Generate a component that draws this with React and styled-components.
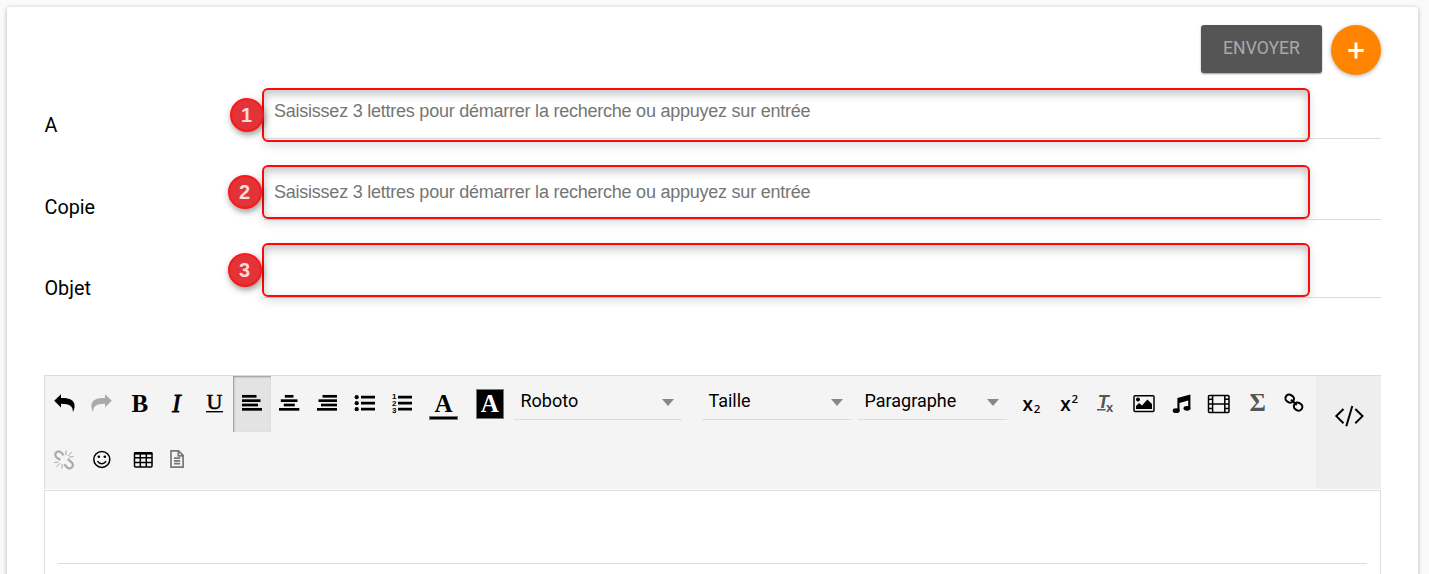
import React from "react";
import styled, { createGlobalStyle } from "styled-components";

const Global = createGlobalStyle`
  *, *::before, *::after { box-sizing: border-box; }
  html, body { margin: 0; background: #fafafa; overflow: hidden; }
  body { font-family: Roboto, sans-serif; color: #000; }
  button, input { font: inherit; border: 0; padding: 0; outline: 0; background: transparent; color: inherit; }
`;

const Page = styled.div`
  height: 574px;
  padding: 7px 11px 0 7px;
  overflow: hidden;
`;

const Card = styled.main`
  height: 640px;
  padding: 18px 37px 0;
  background: #fff;
  border-radius: 3px;
  box-shadow: 0 1px 5px rgba(0, 0, 0, 0.28);
`;

const Actions = styled.header`
  display: flex;
  justify-content: flex-end;
  gap: 9px;
  height: 50px;
`;

const SendButton = styled.button`
  width: 121px;
  height: 48px;
  padding-bottom: 2px;
  border-radius: 3px;
  background: #555;
  color: #aaa;
  font-size: 17.6px;
  box-shadow: 0 1px 2px rgba(0, 0, 0, 0.4);
`;

const AddButton = styled.button`
  display: grid;
  place-items: center;
  width: 50px;
  height: 50px;
  border-radius: 50%;
  background: #ff8500;
  box-shadow: 0 1px 4px rgba(0, 0, 0, 0.32);
`;

const Row = styled.div`
  display: flex;
  align-items: flex-end;
  height: ${(p) => p.$height}px;
`;

const Label = styled.label`
  width: 220px;
  margin-bottom: ${(p) => p.$lift}px;
  padding-left: 0.5px;
  font-size: 19.8px;
  line-height: 24px;
`;

const Field = styled.div`
  position: relative;
  flex: 1;
  height: 52px;
  border-bottom: 1px solid #dcdcdc;
`;

const Input = styled.input`
  display: block;
  width: 100%;
  height: 48px;
  padding-left: 10px;
  font-family: "Liberation Sans", Arial, sans-serif;
  font-size: 18px;
  letter-spacing: -0.235px;
  &::placeholder { color: #757575; opacity: 1; }
`;

const Highlight = styled.div`
  position: absolute;
  left: -2.5px;
  top: ${(p) => p.$top}px;
  width: 1048px;
  height: 54px;
  border: 2px solid #fa0a0a;
  border-radius: 6px;
  box-shadow: 0 4px 10px rgba(0, 0, 0, 0.13), inset 0 4px 10px rgba(0, 0, 0, 0.24);
  pointer-events: none;
`;

const Badge = styled.span`
  position: absolute;
  left: ${(p) => p.$left}px;
  top: 8px;
  display: grid;
  place-items: center;
  width: 34px;
  height: 34px;
  border: 2px solid #fb1818;
  border-radius: 50%;
  background: #e23338;
  color: #ffdada;
  font: bold 20px/30px "Liberation Sans", Arial, sans-serif;
  box-shadow: 1px 3px 6px rgba(0, 0, 0, 0.4);
`;

const Toolbar = styled.div`
  display: flex;
  height: 114px;
  margin-top: 77px;
  border-top: 1px solid #dcdcdc;
  border-left: 1px solid #dcdcdc;
  background: #f4f4f4;
`;

const Tools = styled.div`
  flex: 1;
`;

const ToolRow = styled.div`
  display: flex;
  height: 56px;
`;

const Tool = styled.button`
  display: grid;
  place-items: center;
  flex: none;
  width: ${(p) => p.$width || 37.6}px;
  height: 56px;
  color: ${(p) => p.$color || "#000"};
  background: ${(p) => (p.$active ? "#e3e3e3" : "transparent")};
  box-shadow: ${(p) => (p.$active ? "inset 1px 1px 2px rgba(0,0,0,.35)" : "none")};
  svg { display: block; overflow: visible; }
`;

const Select = styled.div`
  display: flex;
  align-items: center;
  justify-content: space-between;
  flex: none;
  width: ${(p) => p.$width}px;
  height: 44px;
  margin-right: ${(p) => p.$gap}px;
  padding: 6px 8px 0 1px;
  border-bottom: 1px solid #dcdcdc;
  font-size: 18px;
`;

const Caret = styled.span`
  margin-top: 3px;
  border: 6px solid transparent;
  border-top: 7px solid #888;
  border-bottom: 0;
`;

const CodeButton = styled.button`
  display: grid;
  place-items: center;
  width: 65px;
  padding-bottom: 33px;
  background: #eee;
`;

const Editor = styled.section`
  height: 140px;
  margin-top: 1px;
  padding: 72px 13px 0;
  border: 1px solid #dcdcdc;
`;

const Rule = styled.div`
  height: 1px;
  background: #dcdcdc;
`;

const serif = '"Liberation Serif", "Times New Roman", serif';
const sans = '"Open Sans", "Noto Sans", sans-serif';
const arial = '"Liberation Sans", Arial, sans-serif';

const Svg = ({ children, w = 24, h = 24 }) => (
  <svg width={w} height={h} viewBox={`0 0 ${w} ${h}`} fill="currentColor">
    {children}
  </svg>
);

const Lines = ({ rows }) => (
  <g stroke="currentColor" strokeWidth="2.7" fill="none">
    {rows.map(([a, b], i) => (
      <path key={i} d={`M${a} ${4.3 + i * 4.35}H${b}`} />
    ))}
  </g>
);

const ListLines = () => (
  <path d="M8 5.2h14M8 11.2h14M8 17.2h14" stroke="currentColor" strokeWidth="2.7" />
);

const undoPath = "M2.2 8.7L9 2.3V6C18 5.8 22.6 8.2 22.6 14C22.6 16.3 21.8 18.3 20.9 20C20.9 14 17.8 12 9 11.8V15.4Z";

const icons = {
  undo: <path d={undoPath} />,
  redo: <path d={undoPath} transform="matrix(-1 0 0 1 25 0)" />,
  bold: <text x="4.4" y="19.5" fontFamily={serif} fontWeight="700" fontSize="25">B</text>,
  italic: <text x="7.3" y="19.5" fontFamily={serif} fontStyle="italic" fontSize="25" stroke="currentColor" strokeWidth=".9">I</text>,
  underline: (
    <g>
      <text x="4.5" y="17" fontFamily={serif} fontSize="22" stroke="currentColor" strokeWidth=".6">U</text>
      <path d="M4 19h17v1.4H4z" />
    </g>
  ),
  left: <Lines rows={[[2, 16.5], [2, 20.5], [2, 18], [2, 22]]} />,
  center: <Lines rows={[[7.8, 16.5], [3.8, 20.5], [6.8, 17.8], [2, 22.3]]} />,
  right: <Lines rows={[[7.5, 22], [3.5, 22], [6, 22], [2, 22]]} />,
  bullets: (
    <g>
      <ListLines />
      <circle cx="3.7" cy="5.2" r="2.1" /><circle cx="3.7" cy="11.2" r="2.1" /><circle cx="3.7" cy="17.2" r="2.1" />
    </g>
  ),
  numbers: (
    <g fontFamily={arial} fontWeight="700" fontSize="8">
      <ListLines />
      <text x="2" y="6.8">1</text><text x="2" y="13.9">2</text><text x="2" y="21">3</text>
    </g>
  ),
  clear: (
    <g fontFamily={arial} fontWeight="700">
      <text x="3.8" y="16" fontSize="18" fontStyle="italic">T</text>
      <path d="M3 17h8.5v1.5H3z" />
      <text x="12" y="19.7" fontSize="13">x</text>
    </g>
  ),
  sub: (
    <g fontFamily={sans} fontWeight="600">
      <text x="3.4" y="18.7" fontSize="19">x</text>
      <text x="14.7" y="21.4" fontSize="11.5">2</text>
    </g>
  ),
  sup: (
    <g fontFamily={sans} fontWeight="600">
      <text x="3.2" y="18.7" fontSize="19">x</text>
      <text x="14.5" y="11.2" fontSize="11.5">2</text>
    </g>
  ),
  image: (
    <g>
      <rect x="2" y="3.7" width="20" height="15.8" rx="1.2" fill="none" stroke="currentColor" strokeWidth="1.5" />
      <circle cx="6" cy="7.6" r="2" />
      <path d="M4 17v-3l3-3 3 2.4 5.4-6L20 12v5z" />
    </g>
  ),
  music: (
    <g>
      <path d="M7.4 6L20.4 2.6V15.8H18.2V8.4L9.5 10.9V19H7.4Z" />
      <ellipse cx="6.2" cy="18.7" rx="3.5" ry="2.4" />
      <ellipse cx="17" cy="16.3" rx="3.5" ry="2.4" />
    </g>
  ),
  film: (
    <g fill="none" stroke="currentColor" strokeWidth="1.5">
      <rect x="1.5" y="3.4" width="20.5" height="17" rx="1" />
      <path d="M5.6 3.4v17M17.8 3.4v17M5.6 11.9h12.2M1.5 7.2h4M1.5 11.9h4M1.5 16.4h4M18 7.2h4M18 11.9h4M18 16.4h4" />
    </g>
  ),
  sigma: <text x="4.6" y="19.2" fontFamily={serif} fontWeight="700" fontSize="25">Σ</text>,
  link: (
    <g fill="none" stroke="currentColor" strokeWidth="2.1">
      <rect x="3.4" y="2.9" width="8.6" height="7.4" rx="3.6" transform="rotate(32 7.7 6.6)" />
      <rect x="11.8" y="10.9" width="8.6" height="7.4" rx="3.6" transform="rotate(32 16.1 14.6)" />
      <path d="M9 7.8l5.8 5.1" />
    </g>
  ),
  unlink: (
    <g fill="none" stroke="currentColor">
      <path strokeWidth="2.2" d="M8.3 12L4.5 9.4C2.8 7.5 3 5 4.8 4c1.7-1 3.4-.4 4.6.8l2.3 2.4M15.8 11l4 3.6c1.6 1.8 1.4 4-.2 5.1-1.7 1.1-3.5.8-4.8-.7l-2.6-2.8" />
      <path strokeWidth="1" d="M14 7.2V2.3M16 8l3.8-4.1M17 9.3l4.6-.9M10 16v4.7M8 15.2l-3.7 3.7M6.5 14l-4.2.6" />
    </g>
  ),
  smile: (
    <g>
      <circle cx="12.8" cy="11.4" r="8" fill="none" stroke="currentColor" strokeWidth="1.5" />
      <circle cx="9.8" cy="8.8" r="1.3" /><circle cx="15.8" cy="8.8" r="1.3" />
      <path d="M8.4 13.2q4.4 5 8.8 0" fill="none" stroke="currentColor" strokeWidth="1.4" />
    </g>
  ),
  table: (
    <g fill="none" stroke="currentColor" strokeWidth="1.5">
      <rect x="3.5" y="4.7" width="17.5" height="14.3" rx="1" />
      <path d="M9.3 5v14M15.3 5v14M3.3 9.8h18M3.3 14.4h18" />
      <path d="M3.3 5.4h18" strokeWidth="2.5" />
    </g>
  ),
  doc: (
    <g fill="none" stroke="currentColor" strokeWidth="1.7">
      <path d="M6 2.8h7.5l4.6 4.6v11.8H6zM13.3 3v4.8h4.7" />
      <path d="M9 10.2h6.2M9 12.9h6.2M9 15.6h6.2" />
    </g>
  ),
};

const Icon = ({ name, ...rest }) => (
  <Tool aria-label={name} {...rest}>
    <Svg>{icons[name]}</Svg>
  </Tool>
);

const hint = "Saisissez 3 lettres pour démarrer la recherche ou appuyez sur entrée";
const fields = [
  { label: "A", height: 64, lift: 1, top: 1, badge: -34, placeholder: hint },
  { label: "Copie", height: 81, lift: 0, top: -3, badge: -36, placeholder: hint },
  { label: "Objet", height: 78, lift: -3, top: -3, badge: -36 },
];

export default function App() {
  return (
    <Page>
      <Global />
      <Card>
        <Actions>
          <SendButton>ENVOYER</SendButton>
          <AddButton aria-label="Ajouter">
            <Svg><path d="M4.3 12.4h15.4M12 4.5v16" stroke="#fff" strokeWidth="3" /></Svg>
          </AddButton>
        </Actions>
        {fields.map((f, i) => (
          <Row key={f.label} $height={f.height}>
            <Label $lift={f.lift}>{f.label}</Label>
            <Field>
              <Input placeholder={f.placeholder} aria-label={f.label} />
              <Highlight $top={f.top}>
                <Badge $left={f.badge}>{i + 1}</Badge>
              </Highlight>
            </Field>
          </Row>
        ))}
        <Toolbar>
          <Tools>
            <ToolRow>
              <Icon name="undo" />
              <Icon name="redo" $color="#aaa" />
              <Icon name="bold" />
              <Icon name="italic" />
              <Icon name="underline" />
              <Icon name="left" $active />
              <Icon name="center" />
              <Icon name="right" />
              <Icon name="bullets" />
              <Icon name="numbers" />
              <Tool $width={45} aria-label="Couleur du texte">
                <Svg w={30} h={30}>
                  <text x="6.5" y="22.5" fontFamily={serif} fontWeight="700" fontSize="25">A</text>
                  <rect x="1.5" y="27.5" width="28" height="3" stroke="#777" />
                </Svg>
              </Tool>
              <Tool $width={48} aria-label="Couleur de fond">
                <Svg w={28} h={30}>
                  <rect x=".5" y=".5" width="27" height="29" stroke="#777" />
                  <text x="4.7" y="22.5" fill="#fff" fontFamily={serif} fontWeight="700" fontSize="25">A</text>
                </Svg>
              </Tool>
              <Select $width={168} $gap={20}>
                <span>&#8202;&#8202;&#8202;Roboto</span>
                <Caret />
              </Select>
              <Select $width={149} $gap={7}>
                <span>&#8202;&#8202;&#8202;Taille</span>
                <Caret />
              </Select>
              <Select $width={149} $gap={5.5}>
                <span>&#8202;&#8202;&#8202;Paragraphe</span>
                <Caret />
              </Select>
              <Icon name="sub" />
              <Icon name="sup" />
              <Icon name="clear" $color="#555" />
              <Icon name="image" />
              <Icon name="music" />
              <Icon name="film" />
              <Icon name="sigma" $color="#555" />
              <Icon name="link" />
            </ToolRow>
            <ToolRow>
              <Icon name="unlink" $color="#aaa" />
              <Icon name="smile" />
              <Icon name="table" $width={45} />
              <Icon name="doc" $width={24} $color="#777" />
            </ToolRow>
          </Tools>
          <CodeButton aria-label="HTML">
            <Svg w={30} h={24}>
              <path d="M9.5 5L2.3 12.1L9.5 19.2M21.3 5L28.5 12.1L21.3 19.2M18.3 2L12.3 22.3" fill="none" stroke="currentColor" strokeWidth="2" />
            </Svg>
          </CodeButton>
        </Toolbar>
        <Editor><Rule /></Editor>
      </Card>
    </Page>
  );
}
